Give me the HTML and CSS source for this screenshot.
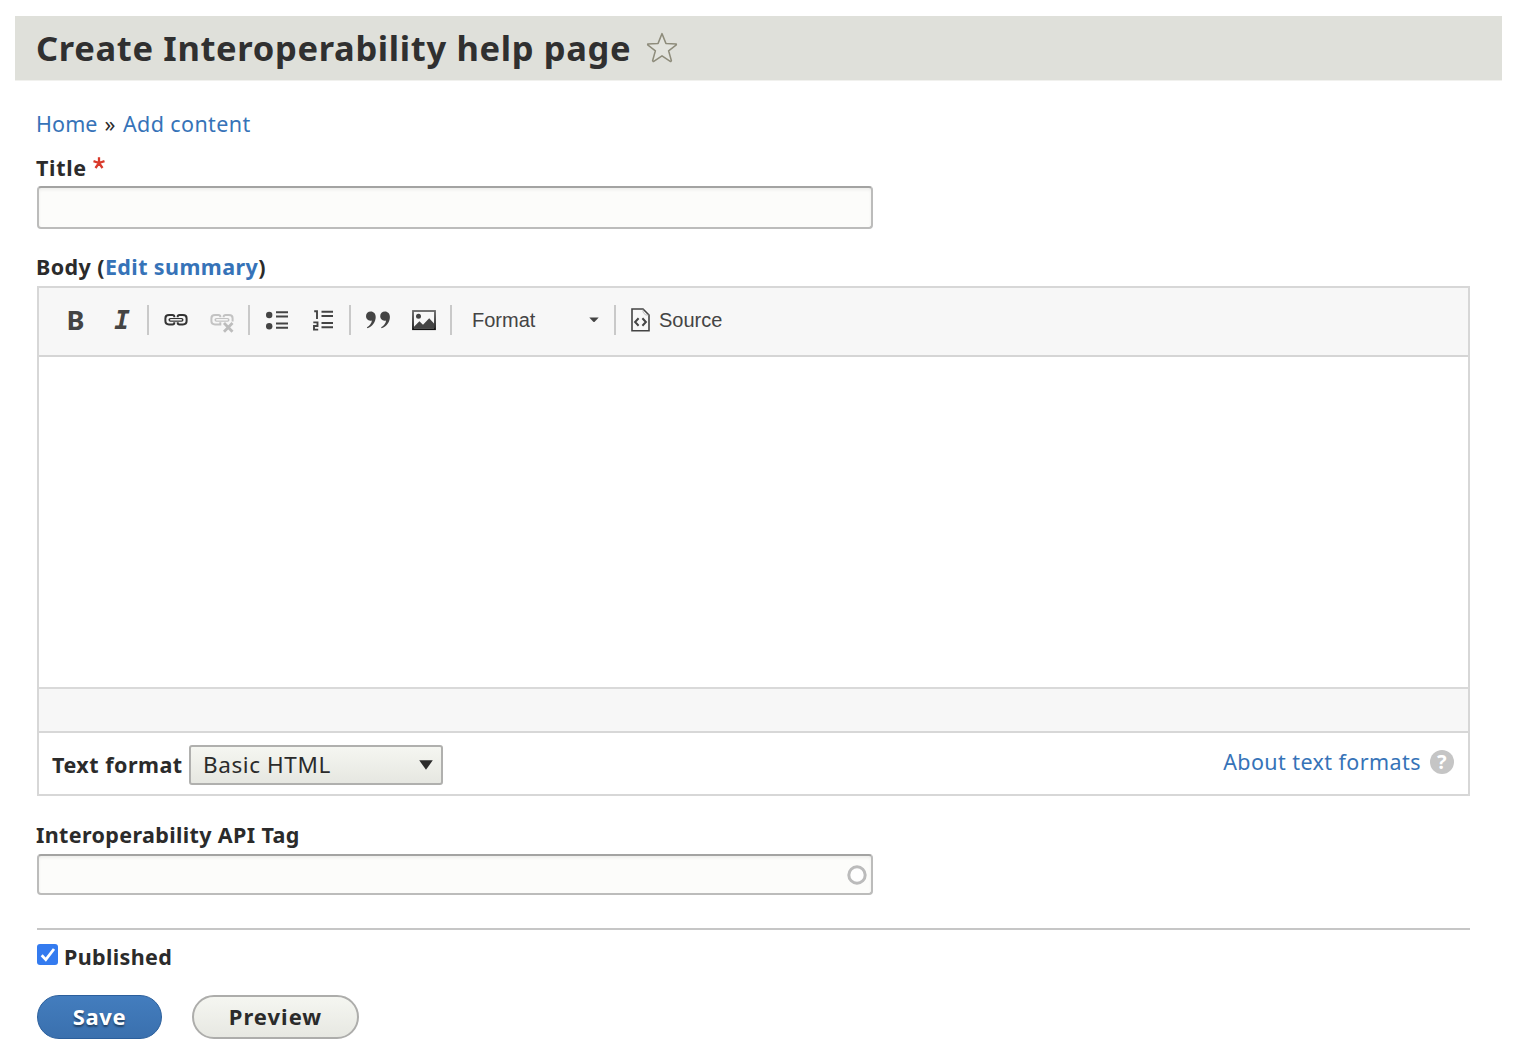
FILE: index.html
```html
<!DOCTYPE html>
<html lang="en">
<head>
<meta charset="utf-8">
<title>Create Interoperability help page</title>
<link rel="stylesheet" href="styles.css">
</head>
<body>
<header class="page-header">
  <h1 class="page-title">Create Interoperability help page</h1>
  <svg class="star" width="32" height="32" viewBox="0 0 32 32"><path d="M16 1.6 L19.9 11.4 L30.3 11.9 L30.3 12.9 L22.6 18.8 L25.4 28.8 L24.6 29.6 L16 23.8 L7.4 29.6 L6.6 28.8 L9.4 18.8 L1.7 12.9 L1.7 11.9 L12.1 11.4 Z" fill="#e3e4de" stroke="#8e8c7b" stroke-width="1.5" stroke-linejoin="round"/></svg>
</header>
<main class="content">
  <nav class="breadcrumb"><a class="link home" href="#">Home</a><span class="crumb-sep">»</span><a class="link add" href="#">Add content</a></nav>
  <label class="label title-label" for="title"><span class="t-title">Title</span><svg class="required" width="12" height="12" viewBox="0 0 12 12"><path d="M6 6V.2M6 6L.5 4.2M6 6L11.5 4.2M6 6L2.5 11M6 6L9.5 11" stroke="#d93a2b" stroke-width="2.3" fill="none"/></svg></label>
  <input class="text-input title-input" id="title" type="text">
  <div class="label body-label"><span class="t-body">Body (<a class="link" href="#">Edit summary</a>)</span></div>
  <section class="editor">
    <div class="toolbar">
      <span class="tool bold">B</span>
      <span class="tool italic">I</span>
      <span class="sep"></span>
      <span class="tool"><svg width="24" height="14" viewBox="0 0 24 14" fill="none"><path d="M10.3 4.3V3.6Q10.3 2 8.5 2H5Q1.4 2 1.4 5.2V8Q1.4 11.4 5 11.4H8.5Q10.3 11.4 10.3 9.8V9.3M13.7 4.3V3.6Q13.7 2 15.5 2H19Q22.6 2 22.6 5.2V8Q22.6 11.4 19 11.4H15.5Q13.7 11.4 13.7 9.8V9.3" stroke="#333" stroke-width="2"/><path d="M6.4 6.8H17.6" stroke="#333" stroke-width="3.8" stroke-linecap="round"/><path d="M6.2 6.8H17.8" stroke="#f2f2f2" stroke-width="1.5"/></svg></span>
      <span class="tool"><svg class="unlink" width="24" height="20" viewBox="0 0 24 20" fill="none"><path d="M10.3 4.3V3.6Q10.3 2 8.5 2H5Q1.4 2 1.4 5.2V8Q1.4 11.4 5 11.4H10.3V9.3M13.7 4.3V3.6Q13.7 2 15.5 2H19Q22.6 2 22.6 5.2V8.4" stroke="#c3c3c3" stroke-width="2"/><path d="M6.4 6.8H17.6" stroke="#c3c3c3" stroke-width="3.8" stroke-linecap="round"/><path d="M6.2 6.8H17.8" stroke="#f7f7f7" stroke-width="1.5"/><path d="M14 10L22.5 18.7M22.5 10L14 18.7" stroke="#bdbdbd" stroke-width="2.8"/></svg></span>
      <span class="sep"></span>
      <span class="tool"><svg width="22" height="20" viewBox="0 0 22 20"><circle cx="3.2" cy="5" r="3.2" fill="#444"/><circle cx="3.2" cy="16.2" r="3.2" fill="#444"/><path d="M10 2.3H22M10 6.5H22M10 13.5H22M10 17.7H22" stroke="#444" stroke-width="1.9"/></svg></span>
      <span class="tool"><svg width="20" height="22" viewBox="0 0 20 22"><path d="M1.2 2.2H4V10M.3 13.4H4.5V17H1V20.6H5.2" stroke="#444" stroke-width="1.9" fill="none"/><path d="M8.5 2.8H20M8.5 7H20M8.5 14H20M8.5 18.2H20" stroke="#444" stroke-width="1.9"/></svg></span>
      <span class="sep"></span>
      <span class="tool"><svg width="24" height="18" viewBox="0 0 24 18" fill="#444"><path id="quote" d="M4.8.5C7.7.5 9.7 2.8 9.7 6C9.7 11 6.5 15.5 1.4 17.3L.9 16.3C3.8 14.5 5.6 12.2 5.9 9.4C2.4 10.5 0 8 0 5.2C0 2.4 2 .5 4.8.5Z"/><use href="#quote" x="14.2"/></svg></span>
      <span class="tool"><svg width="24" height="22" viewBox="0 0 24 22"><defs><linearGradient id="frame" x1="0" x2="0" y1="0" y2="1"><stop offset="0" stop-color="#666"/><stop offset="1" stop-color="#111"/></linearGradient></defs><rect x="1" y="2" width="22" height="18.2" fill="none" stroke="url(#frame)" stroke-width="1.8"/><circle cx="6.5" cy="7.2" r="2.5" fill="#444"/><path d="M2 19.5V17.7L7.4 12.2L11 15.8L17.2 9.2L22 14.5V19.5Z" fill="#444"/></svg></span>
      <span class="sep"></span>
      <span class="format"><span class="t-format">Format</span><svg width="10" height="6" viewBox="0 0 10 6"><path d="M.3.5H9.7L5.7 4.8Q5 5.4 4.3 4.8Z" fill="#444"/></svg></span>
      <span class="sep"></span>
      <span class="source"><svg width="19" height="24" viewBox="0 0 19 24" fill="none" stroke="#444"><path d="M1 1H12L18 7V22.8H1Z" stroke-width="1.6"/><path d="M12 1V4L14.5 7H18" stroke="#999" stroke-width=".6"/><path d="M7.6 10.2L4.1 14L7.6 17.8M11.4 10.2L14.9 14L11.4 17.8" stroke-width="2"/></svg><span class="t-source">Source</span></span>
    </div>
    <div class="edit-area"></div>
    <div class="status-bar"></div>
    <div class="format-row">
      <span class="label t-textformat">Text format</span>
      <span class="select"><span class="t-basic">Basic HTML</span><svg width="14" height="10" viewBox="0 0 14 10"><path d="M.2.3H13.8L7 9.8Z" fill="#2b2b2b"/></svg></span>
      <span class="about"><a class="link t-about" href="#">About text formats</a><span class="help">?</span></span>
    </div>
  </section>
  <label class="label api-label" for="tag"><span class="t-api">Interoperability API Tag</span></label>
  <div class="text-input api-input" id="tag"><svg width="20" height="20" viewBox="0 0 20 20"><circle cx="10" cy="10" r="8.2" fill="#fefefe" stroke="#bbb" stroke-width="3"/></svg></div>
  <div class="published"><span class="checkbox"><svg width="16" height="15" viewBox="0 0 16 15"><path d="M1.7 8.3L5.8 12.6L14 2" fill="none" stroke="#fff" stroke-width="2.8"/></svg></span><span class="label t-published">Published</span></div>
  <div class="actions"><button class="button save"><span class="t-save">Save</span></button><button class="button preview"><span class="t-preview">Preview</span></button></div>
</main>
</body>
</html>
```
FILE: styles.css
```css
* { box-sizing: border-box; }
body { margin: 0; padding: 16px 20px 0 15px; background: #fff; color: #2b2b2b; font: 21.5px/30px "Noto Sans", sans-serif; }
svg { display: block; flex: none; }
span, a { white-space: nowrap; }
.link { color: #3673b8; text-decoration: none; }
.page-header { display: flex; align-items: center; height: 64px; padding-left: 21px; background: #dfe0da; box-shadow: 0 1px #f1f1ee; }
.page-title { margin: 0; width: 610px; font-size: 34.5px; line-height: 64px; font-weight: 700; letter-spacing: .66px; white-space: nowrap; color: #303030; }
.content { display: flex; flex-direction: column; margin: 29px 32px 0 22px; }
.breadcrumb { display: flex; gap: 7px; margin-left: -1px; letter-spacing: .4px; }
.home { letter-spacing: .1px; }
.label { font-weight: 700; font-size: 21.5px; letter-spacing: .36px; }
.title-label { display: flex; margin: 14px 0 3px -1px; }
.t-title { letter-spacing: .7px; }
.required { margin: 4px 0 0 6px; }
.text-input { width: 836px; padding: 0; border: 2px solid #bcbcbb; border-top-color: #a3a3a2; border-radius: 4px; background: #fcfcfa; box-shadow: inset 0 2px 3px #eeeeec; outline: none; }
.title-input { height: 43px; }
.body-label { margin: 23px 0 4px -1px; letter-spacing: .4px; }
.editor { display: flex; flex-direction: column; height: 510px; width: 1433px; border: 2px solid #d7d7d7; }
.toolbar { display: flex; align-items: center; height: 69px; padding: 0 0 3px 13px; border-bottom: 2px solid #d5d5d5; background: #f7f7f7; }
.tool { display: flex; justify-content: center; align-items: center; width: 46px; height: 46px; }
.bold { padding-left: 1px; font-size: 27px; font-weight: 700; color: #444; }
.italic { padding-left: 2px; font: italic 700 26px/30px "DejaVu Sans Mono", monospace; color: #444; }
.unlink { margin-top: 6px; }
.sep { width: 2px; height: 30px; margin: 0 4px 0 3px; background: #c9c9c9; }
.format { display: flex; align-items: center; justify-content: space-between; width: 143px; padding: 0 0 0 16px; font: 20px/24px "Liberation Sans", sans-serif; color: #444; }
.format + .sep { margin-left: 15px; }
.source { display: flex; align-items: center; gap: 9px; padding-left: 11px; font: 20px/24px "Liberation Sans", sans-serif; color: #444; }
.edit-area { height: 330px; background: #fff; }
.status-bar { height: 46px; border-top: 2px solid #d9d9d9; border-bottom: 2px solid #d7d7d7; background: #f7f7f7; }
.format-row { display: flex; align-items: flex-start; padding: 12px 14px 0 13px; }
.format-row .label { width: 137px; padding-top: 5px; letter-spacing: .5px; }
.select { display: flex; align-items: center; justify-content: space-between; width: 254px; height: 40px; padding: 0 8px 0 12px; border: 2px solid #b0b0ae; border-radius: 3px; background: linear-gradient(#f5f6f1, #e6e7e1); font-size: 22.5px; letter-spacing: .6px; }
.about { display: flex; align-items: center; gap: 9px; margin: 2px 0 0 auto; letter-spacing: .42px; }
.help { width: 24px; height: 24px; border-radius: 50%; background: #c5c5c5; color: #fff; font: 700 20px/24px "Noto Sans", sans-serif; text-align: center; }
.api-label { margin: 24px 0 4px -1px; }
.api-input { display: flex; align-items: center; justify-content: flex-end; height: 41px; padding-right: 4px; }
.published { display: flex; height: 67px; margin-top: 33px; padding-top: 12px; border-top: 2px solid #c6c6c6; }
.checkbox { display: flex; align-items: center; justify-content: center; width: 21px; height: 21px; margin: 2px 6px 0 0; border-radius: 3px; background: #347bef; }
.actions { display: flex; gap: 30px; }
.button { height: 44px; padding: 0 0 2px; border: 2px solid #adadab; border-radius: 22px; background: linear-gradient(#f5f6f1, #e7e8e2); color: #2b2b2b; font: 700 22px/38px "Noto Sans", sans-serif; letter-spacing: .6px; }
.save { width: 125px; border: 1px solid #2b5f9c; background: linear-gradient(#437dbe, #3a70ae); color: #fff; text-shadow: 0 2px 2px rgba(0, 0, 0, .45); }
.preview { width: 167px; letter-spacing: 1px; }
```
